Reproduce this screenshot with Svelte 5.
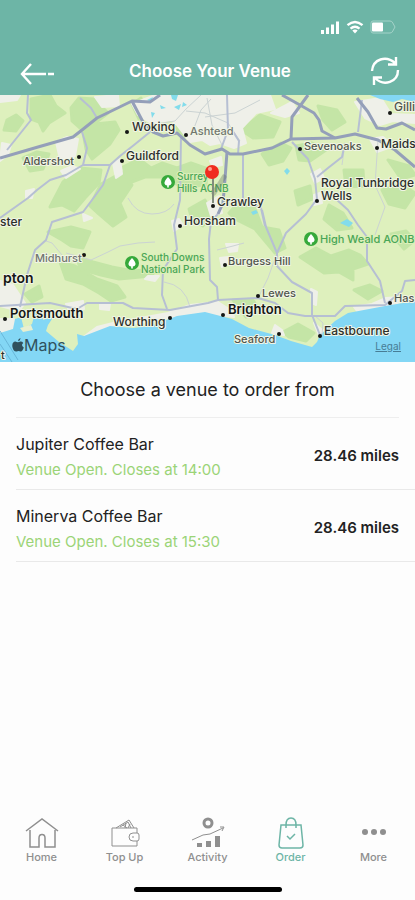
<script lang="ts">
	type Place = {
		name: string;
		x: number;
		y: number;
		size?: number;
		kind?: string;
		dot?: [number, number];
	};

	const venues = [
		{ name: 'Jupiter Coffee Bar', status: 'Venue Open. Closes at 14:00', distance: '28.46 miles' },
		{ name: 'Minerva Coffee Bar', status: 'Venue Open. Closes at 15:30', distance: '28.46 miles' }
	];

	const tabs = ['Home', 'Top Up', 'Activity', 'Order', 'More'];
	let activeTab = 'Order';

	const places: Place[] = [
		{ name: 'Woking', x: 132, y: 36, size: 12, kind: 'town', dot: [127, 37] },
		{ name: 'Ashtead', x: 190, y: 40, kind: 'minor', dot: [186, 40] },
		{ name: 'Guildford', x: 126, y: 65, size: 12, kind: 'town', dot: [122, 66] },
		{ name: 'Aldershot', x: 23, y: 70, dot: [79, 62] },
		{ name: 'Crawley', x: 217, y: 111, size: 12, kind: 'town', dot: [213, 111] },
		{ name: 'Horsham', x: 184, y: 130, size: 12, kind: 'town', dot: [180, 131] },
		{ name: 'Sevenoaks', x: 304, y: 55, dot: [300, 54] },
		{ name: 'Gilli', x: 394, y: 16, size: 12, dot: [390, 18] },
		{ name: 'Maids', x: 381, y: 53, size: 12, kind: 'town', dot: [377, 53] },
		{ name: 'Royal Tunbridge', x: 321, y: 92, size: 12, kind: 'town' },
		{ name: 'Wells', x: 321, y: 105, size: 12, kind: 'town', dot: [317, 106] },
		{ name: 'ster', x: 0, y: 131, size: 12, kind: 'town' },
		{ name: 'Midhurst', x: 35, y: 167, kind: 'minor', dot: [84, 160] },
		{ name: 'pton', x: 3, y: 188, size: 14, kind: 'city' },
		{ name: 'Portsmouth', x: 10, y: 223, size: 13, kind: 'city', dot: [5, 224] },
		{ name: 'Worthing', x: 113, y: 231, size: 12, kind: 'town', dot: [170, 223] },
		{ name: 'Burgess Hill', x: 228, y: 170, dot: [225, 170] },
		{ name: 'Lewes', x: 262, y: 202, dot: [258, 201] },
		{ name: 'Brighton', x: 228, y: 219, size: 13, kind: 'city', dot: [223, 220] },
		{ name: 'Seaford', x: 234, y: 248, dot: [279, 239] },
		{ name: 'Eastbourne', x: 324, y: 240, size: 12, kind: 'town', dot: [320, 241] },
		{ name: 'Has', x: 394, y: 207, dot: [390, 208] },
		{ name: 't', x: 1, y: 264, kind: 'town' },
		{ name: 'Surrey', x: 177, y: 85, size: 10, kind: 'park' },
		{ name: 'Hills AONB', x: 177, y: 97, size: 10, kind: 'park' },
		{ name: 'South Downs', x: 141, y: 166, size: 10, kind: 'park' },
		{ name: 'National Park', x: 141, y: 178, size: 10, kind: 'park' },
		{ name: 'High Weald AONB', x: 320, y: 148, kind: 'park' }
	];

	const parkMarkers = [
		[168, 87],
		[132, 168],
		[311, 144]
	];

	const motorways = [
		'M0 63 L38 52 L73 42 L82 35 L97 23 L132 6 L150 7 L160 0',
		'M132 6 L143 27 L153 37 L163 41 L177 38 L190 50 L205 59 L222 54 L230 59 L243 59 L272 53 L291 44 L335 43 L355 39 L378 45 L395 55 L415 72',
		'M308 0 L292 22 L291 44',
		'M282 0 L300 10 L314 18 L319 25 L322 36 L335 43',
		'M357 3 L368 17 L377 33 L386 34 L402 28 L415 35',
		'M227 57 L225 84 L223 108 L218 119'
	];

	const roads = [
		'M80 3 L91 13 L97 23',
		'M28 0 L27 18 L31 25 L7 55',
		'M82 37 L87 53 L83 70 L66 80 L50 85 L37 95 L28 103 L0 123',
		'M83 70 L110 70 L120 61 L134 50 L150 37',
		'M110 70 L103 90 L92 105 L83 117 L52 127 L46 145 L35 155 L27 180 L20 212',
		'M181 40 L180 105 L174 130 L177 154 L163 175 L162 200 L167 214',
		'M0 211 L50 208 L77 214 L87 208 L123 208 L133 213 L170 215 L208 208 L218 205 L258 203 L275 208 L288 218 L305 221 L335 221 L345 211 L385 210 L402 196 L405 186 L415 185',
		'M218 119 L211 126 L209 144 L210 185 L217 192 L218 205',
		'M262 115 L266 132 L277 158 L277 171 L292 187 L312 198 L312 220 L320 240',
		'M243 60 L243 104 L261 113 L265 131',
		'M292 47 L308 64 L315 84 L317 104 L306 119 L286 138 L277 158',
		'M317 82 L328 73 L342 62 L345 48',
		'M336 104 L348 115 L358 130 L367 142 L367 166 L380 186 L385 208',
		'M362 5 L358 37',
		'M227 0 L228 35 L221 54',
		'M238 59 L239 46 L232 35'
	];

	const lanes = [
		'M66 158 L91 165 L108 157 L120 151 L138 148 L155 147',
		'M128 103 Q136 119 152 119 Q167 119 174 109',
		'M150 30 L175 26 L186 14 L201 0',
		'M194 33 L201 15 L211 4',
		'M164 187 Q185 190 190 212',
		'M345 48 L342 70',
		'M378 45 L375 90 L385 112 L375 140',
		'M207 3 L212 30 L222 50',
		'M240 46 L228 28 L205 18 L186 16',
		'M277 158 L268 183 L258 203',
		'M62 160 L52 148 L46 146',
		'M205 22 L235 18 L260 5',
		'M217 155 L233 151 L244 148',
		'M314 220 L323 228 L322 240'
	];

	const forests = [
		'M31 4 L50 0 L56 11 L65 18 L49 28 L43 36 L39 27 L31 24 Z',
		'M71 13 L79 3 L94 4 L108 18 L94 29 L81 34 L72 26 Z',
		'M83 37 L95 29 L115 27 L119 35 L110 49 L92 64 L86 54 Z',
		'M7 25 L16 20 L23 26 L16 36 L4 35 Z',
		'M23 63 L37 57 L49 59 L43 74 L30 76 Z',
		'M63 87 L80 73 L101 75 L99 88 L85 103 L74 116 L62 110 L50 112 Z',
		'M101 89 L123 77 L132 90 L120 108 L126 122 L113 131 L99 119 L90 111 Z',
		'M123 72 L139 64 L151 73 L162 68 L177 73 L191 68 L208 74 L206 90 L181 92 L166 82 L145 82 L129 88 Z',
		'M132 9 L141 3 L145 16 L139 24 Z',
		'M174 29 L184 22 L191 33 L183 44 Z',
		'M48 137 L71 132 L90 137 L83 153 L71 151 L62 145 Z',
		'M77 162 L93 167 L112 172 L133 176 L157 174 L151 181 L119 184 L101 180 L80 174 Z',
		'M60 167 L75 171 L97 184 L117 191 L125 202 L111 206 L99 198 L83 189 L66 184 Z',
		'M25 199 L39 191 L42 202 L32 207 Z',
		'M189 114 L205 105 L211 119 L203 131 L192 124 Z',
		'M241 35 L260 20 L280 27 L273 42 L253 43 Z',
		'M262 59 L281 48 L291 53 L283 66 L269 70 Z',
		'M296 51 L312 48 L326 55 L310 66 L299 65 Z',
		'M318 11 L337 15 L345 27 L332 35 L323 25 Z',
		'M344 75 L363 75 L364 91 L346 92 Z',
		'M295 96 L310 91 L312 104 L298 110 Z',
		'M240 106 L254 111 L262 132 L279 135 L285 153 L275 158 L255 134 L237 125 L229 118 Z',
		'M329 110 L343 118 L352 133 L337 135 L324 124 Z',
		'M382 95 L401 89 L415 98 L405 113 L389 109 Z',
		'M388 65 L409 71 L415 80 L401 84 Z',
		'M300 162 L316 153 L331 161 L349 155 L360 160 L368 169 L353 174 L353 185 L339 177 L324 178 Z',
		'M233 205 L253 205 L260 216 L246 222 Z',
		'M283 237 L298 229 L314 238 L306 246 L289 242 Z',
		'M354 195 L370 190 L382 196 L368 204 Z',
		'M391 139 L406 136 L415 145 L404 154 Z'
	];

	const urban = [
		'M0 0 L20 0 L17 5 L0 7 Z',
		'M95 2 L118 0 L119 11 L102 12 Z',
		'M56 47 L67 42 L78 44 L75 61 L64 69 L59 60 Z',
		'M2 48 L11 50 L8 60 L0 66 Z',
		'M132 9 L155 0 L270 0 L275 14 L256 18 L242 33 L246 48 L234 53 L220 48 L210 50 L202 45 L190 47 L177 30 L171 25 L151 28 L138 20 Z',
		'M113 68 L120 64 L122 79 L116 83 Z',
		'M26 96 L34 94 L32 103 L26 103 Z',
		'M61 76 L72 71 L80 74 L66 83 Z',
		'M83 119 L92 123 L84 126 Z',
		'M210 66 L221 62 L222 70 L213 72 Z',
		'M207 108 L219 101 L222 118 L211 121 Z',
		'M172 126 L179 124 L183 130 L174 136 Z',
		'M271 18 L292 7 L299 18 L285 22 Z',
		'M355 7 L381 3 L391 19 L415 20 L415 28 L393 26 L380 30 L365 23 Z',
		'M370 44 L383 42 L394 51 L377 57 Z',
		'M311 79 L320 74 L324 83 L315 88 Z',
		'M314 100 L320 98 L322 108 L314 110 Z',
		'M226 149 L238 149 L237 156 L229 157 Z',
		'M220 163 L228 162 L227 169 L222 172 Z',
		'M0 186 L13 190 L25 208 L19 216 L0 211 Z',
		'M0 224 L14 224 L15 232 L0 238 Z',
		'M66 209 L83 206 L84 214 L70 217 Z',
		'M82 243 L97 232 L113 228 L168 218 L190 210 L218 207 L232 216 L234 222 L205 218 L177 222 L110 232 Z',
		'M275 230 L282 235 L284 240 L272 238 Z',
		'M311 194 L317 197 L316 210 L312 208 Z',
		'M314 228 L322 235 L327 235 L320 243 Z',
		'M354 212 L372 209 L386 203 L400 202 L401 207 L386 211 L357 216 Z',
		'M100 208 L110 208 L109 215 L100 214 Z',
		'M148 181 L159 181 L155 186 L145 184 Z'
	];
</script>

<div class="page">
	<header class="header">
		<div class="status-bar">
			<svg class="signal" viewBox="0 0 19 14" aria-hidden="true">
				<path d="M0 10h3v4H0zM5 7.500h3V14H5zM10 4.500h3V14h-3zM15 1.500h3V14h-3z" />
			</svg>
			<svg class="wifi" viewBox="0 0 18 14" aria-hidden="true">
				<path class="arc" d="M1.500 5.200Q9-1.200 16.500 5.200M4.500 8.600Q9 4.800 13.500 8.600" />
				<path d="M6.300 10.600Q9 8.500 11.700 10.600L9 13.500Z" />
			</svg>
			<svg class="battery" viewBox="0 0 26 14" aria-hidden="true">
				<path class="shell" d="M3 1h17q2 0 2.800 2L25 7l-2.200 4q-.8 2-2.800 2H3q-2 0-2-2V3q0-2 2-2z" />
				<rect x="2" y="2.500" width="11" height="9" rx="1" />
			</svg>
		</div>
		<div class="title-bar">
			<button class="icon-button" aria-label="Back">
				<svg class="back" viewBox="0 0 36 24" aria-hidden="true">
					<path d="M11 2L2 12L11 22M2 12H26M28 12H34" />
				</svg>
			</button>
			<h1>Choose Your Venue</h1>
			<button class="icon-button refresh-button" aria-label="Refresh">
				<svg class="refresh" viewBox="0 0 30 30" aria-hidden="true">
					<path d="M2 15C3 3 16-1 25 7M26 1V8.500H18M28 14C28 26 14 31 5 22M4 29V21.500H12" />
				</svg>
			</button>
		</div>
	</header>

	<main>
		<section class="map" aria-label="Map">
			<svg class="map-canvas" viewBox="0 0 415 267" preserveAspectRatio="xMidYMid slice">
				<rect class="land" width="415" height="267" />
				{#each forests as d}
					<path class="forest" {d} />
				{/each}
				{#each urban as d}
					<path class="urban" {d} />
				{/each}

				<!-- Channel coast, harbours and the Thames estuary -->
				<path
					class="water"
					d="M0 238L13 234L15 224L21 222L24 234L32 229L36 214L42 217L43 225L54 221L48 230L46 236L59 247L73 256L78 249L77 239L84 241L110 231L133 233L151 231L177 221L205 217L232 224L249 233L275 240L291 246L312 252L317 247L320 240L335 226L348 218L385 211L415 206V267H0Z"
				/>
				<path class="water" d="M370 0H415V7L402 4L393 7L380 4Z" />
				<path class="sand" d="M20 233L31 230L33 235L23 237Z" />
				<g class="lakes">
					<path d="M147 5l6-3-2 5zM160 10l6 3-5 1zM171 0h7l-2 6-4-2zM174 12l7-3-2 6zM151 17l4 1-3 5zM183 7l4 3-5 2z" />
					<path d="M287 73l3 3-3 4-3-4zM340 128l7-4 6 4-4 4zM251 117l5-2 2 3-5 2z" />
				</g>

				{#each lanes as d}
					<path class="lane" {d} />
				{/each}
				{#each roads as d}
					<path class="road" {d} />
				{/each}
				{#each motorways as d}
					<path class="motorway" {d} />
				{/each}
				<path class="ferry" d="M0 236L18 265M0 249L12 267" />

				{#each parkMarkers as [x, y]}
					<circle class="park-ring" cx={x} cy={y} r="7" />
					<path class="tree" d="M{x} {y - 5}q4 4 3.500 6.500q-.5 2-2.700 2v2h-1.600v-2q-2.200 0-2.700-2q-.5-2.500 3.500-6.500z" />
				{/each}
				{#each places as place}
					{#if place.dot}
						<circle class="dot" cx={place.dot[0]} cy={place.dot[1]} r="2" />
					{/if}
					<text class={place.kind} x={place.x} y={place.y} font-size={place.size ?? 11}>{place.name}</text>
				{/each}

				<path class="pin-shadow" d="M214 98L224 82" />
				<path class="pin-stem" d="M213 82V108" />
				<circle class="pin" cx="212" cy="77" r="7" />
				<circle class="pin-shine" cx="210" cy="74" r="2" />
			</svg>
			<div class="map-brand">
				<svg viewBox="0 0 12 14" aria-hidden="true">
					<path d="M8.500 0Q8.600 2.500 6 3.300Q5.900 1 8.500 0ZM11.300 5Q8.500 7 11.800 9.600Q10.500 13.500 8.800 13.500Q6.500 12.500 4.500 13.500Q1.500 13.800.4 9Q-.3 4 3.500 3.600Q6 4.800 8.200 3.600Q10.200 3.400 11.300 5Z" />
				</svg>
				<span>Maps</span>
			</div>
			<a class="legal" href="#legal">Legal</a>
		</section>

		<section class="venues">
			<h2>Choose a venue to order from</h2>
			<ul>
				{#each venues as venue}
					<li>
						<button class="venue">
							<span class="venue-info">
								<span class="venue-name">{venue.name}</span>
								<span class="venue-status">{venue.status}</span>
							</span>
							<span class="venue-distance">{venue.distance}</span>
						</button>
					</li>
				{/each}
			</ul>
		</section>
	</main>

	<footer>
		<nav class="tab-bar">
			{#each tabs as tab}
				<button class="tab" class:active={tab === activeTab} on:click={() => (activeTab = tab)}>
					<svg viewBox="0 0 36 34" aria-hidden="true">
						{#if tab === 'Home'}
							<path d="M2 15L18 3L34 15M6 14V31H15V22Q15 18.500 18 18.500T21 22V31H31V14" />
						{:else if tab === 'Top Up'}
							<path class="fine" d="M30 17V12H5V30H30V25M30 17H26Q22 17 22 21T26 25H30Q32 25 32 23V19Q32 17 30 17ZM26 20V22" />
							<path class="fine" d="M9 12L22 4L27 12M13 11L21 6L24 12M16 9L20 12M19 7L18 12M23 8L21 12" />
						{:else if tab === 'Activity'}
							<circle class="coin" cx="18" cy="7" r="4" />
							<path class="fine" d="M2 24L13 19L20 18L33 12M30 11L34 11L32 15" />
							<path class="solid" d="M7 27h5v4H7zM16 25h5v6h-5zM25 20h5v11h-5z" />
						{:else if tab === 'Order'}
							<path d="M8 9H28L30 29Q30 32 27 32H9Q6 32 6 29ZM13 12V9Q13 2 18 2T23 9V12M14 20L17 23L22 18" />
						{:else}
							<g class="solid">
								<circle cx="9" cy="16" r="3" />
								<circle cx="18" cy="16" r="3" />
								<circle cx="27" cy="16" r="3" />
							</g>
						{/if}
					</svg>
					<span>{tab}</span>
				</button>
			{/each}
		</nav>
		<div class="home-indicator"></div>
	</footer>
</div>

<style>
	:global(body) {
		margin: 0;
	}

	.page {
		--teal: #6db5a6;
		--gray: #8f8f8f;

		display: flex;
		flex-direction: column;
		min-height: 100vh;
		background: #fdfdfd;
		color: #222;
		font-family: Inter, 'Liberation Sans', sans-serif;
	}

	button {
		border: none;
		background: none;
		padding: 0;
		font-family: inherit;
		color: inherit;
		cursor: pointer;
	}

	svg {
		display: block;
	}

	.header {
		box-sizing: border-box;
		padding-top: 20px;
		background: var(--teal);
		color: #fff;
	}

	.status-bar {
		display: flex;
		justify-content: flex-end;
		gap: 6px;
		height: 26px;
		padding-right: 19px;
		fill: #fff;
	}

	.signal {
		width: 19px;
		height: 14px;
	}

	.wifi {
		width: 18px;
		height: 14px;
	}

	.wifi .arc {
		fill: none;
		stroke: #fff;
		stroke-width: 2.4;
	}

	.battery {
		width: 26px;
		height: 14px;
	}

	.battery .shell {
		fill: none;
		stroke: #a5d3c9;
	}

	.title-bar {
		display: grid;
		grid-template-columns: 1fr auto 1fr;
		align-items: center;
		height: 49px;
		padding: 0 15px 0 20px;
	}

	h1 {
		margin: 0;
		font-size: 17px;
		line-height: 24px;
		font-weight: 600;
	}

	.icon-button svg {
		fill: none;
		stroke: #fff;
		stroke-width: 2.4;
	}

	.back {
		width: 36px;
		height: 24px;
		padding-top: 6px;
	}

	.refresh-button {
		justify-self: end;
	}

	.refresh {
		width: 30px;
		height: 30px;
	}

	/* Map */
	.map {
		position: relative;
		height: 267px;
	}

	.map-canvas {
		width: 100%;
		height: 100%;
	}

	.land {
		fill: #def0bd;
	}

	.forest {
		fill: #c4e5a6;
		stroke: #c4e5a6;
		stroke-width: 3;
		stroke-linejoin: round;
	}

	.urban {
		fill: #eff0e9;
		stroke: #eff0e9;
		stroke-width: 2;
		stroke-linejoin: round;
	}

	.water {
		fill: #83d7f5;
	}

	.sand {
		fill: #e8efcf;
	}

	.lakes {
		fill: #82dceb;
	}

	.lane,
	.road,
	.motorway,
	.ferry {
		fill: none;
		stroke-linejoin: round;
	}

	.lane {
		stroke: #cbd3d3;
	}

	.road {
		stroke: #b6bfd3;
		stroke-width: 2;
	}

	.motorway {
		stroke: #949fb9;
		stroke-width: 3;
	}

	.ferry {
		stroke: #69b6d8;
	}

	.map-canvas text {
		fill: #50554d;
		font-weight: 500;
		stroke: #f1f5e6;
		stroke-width: 2;
		stroke-linejoin: round;
		paint-order: stroke;
	}

	.map-canvas .minor {
		fill: #70766f;
	}

	.map-canvas .town {
		fill: #2c2f2b;
	}

	.map-canvas .city {
		fill: #151715;
		font-weight: 600;
	}

	.map-canvas .park {
		fill: #49a657;
		stroke: #dcefb9;
	}

	.park-ring {
		fill: #36a93b;
	}

	.tree {
		fill: #fff;
	}

	.dot {
		fill: #151715;
	}

	.pin {
		fill: #f02b20;
	}

	.pin-shine {
		fill: #ff9d91;
	}

	.pin-stem {
		stroke: #828c7d;
		stroke-width: 2;
	}

	.pin-shadow {
		stroke: #536153;
		stroke-width: 5;
		stroke-linecap: round;
		opacity: 0.3;
	}

	.map-brand {
		position: absolute;
		bottom: 8px;
		left: 12px;
		display: flex;
		align-items: center;
		color: #30515d;
		font-size: 16px;
		line-height: 18px;
	}

	.map-brand svg {
		width: 12px;
		height: 14px;
		fill: currentColor;
	}

	.legal {
		position: absolute;
		right: 14px;
		bottom: 9px;
		color: #477d96;
		font-size: 10px;
		line-height: 14px;
	}

	/* Venue list */
	h2 {
		margin: 0 16px;
		padding: 16px 0 15px;
		border-bottom: 1px solid #eee;
		font-size: 18px;
		line-height: 24px;
		font-weight: 400;
		text-align: center;
	}

	ul {
		margin: 0;
		padding: 0 0 0 16px;
		list-style: none;
	}

	li {
		border-bottom: 1px solid #e9e9e9;
	}

	.venue {
		display: flex;
		align-items: center;
		justify-content: space-between;
		width: 100%;
		padding: 14px 16px 9px 0;
		text-align: left;
	}

	.venue-info {
		display: flex;
		flex-direction: column;
		gap: 4px;
	}

	.venue-name {
		font-size: 16px;
		line-height: 24px;
	}

	.venue-status {
		color: #9bd477;
		font-size: 15px;
		line-height: 20px;
	}

	.venue-distance {
		font-size: 15px;
		line-height: 20px;
		font-weight: 600;
	}

	/* Tab bar */
	footer {
		margin-top: auto;
		padding-bottom: 8px;
	}

	.tab-bar {
		display: grid;
		grid-template-columns: repeat(5, 1fr);
		padding-bottom: 23px;
	}

	.tab {
		display: flex;
		flex-direction: column;
		align-items: center;
		color: var(--gray);
		font-size: 11px;
		line-height: 14px;
		font-weight: 500;
	}

	.tab.active {
		color: var(--teal);
	}

	.tab svg {
		width: 36px;
		height: 34px;
		fill: none;
		stroke: currentColor;
		stroke-width: 1.5;
	}

	.tab .fine {
		stroke-width: 1;
	}

	.tab .coin {
		stroke-width: 3;
	}

	.tab .solid {
		fill: currentColor;
		stroke: none;
	}

	.home-indicator {
		width: 148px;
		height: 5px;
		margin: 0 auto;
		border-radius: 3px;
		background: #000;
	}
</style>
